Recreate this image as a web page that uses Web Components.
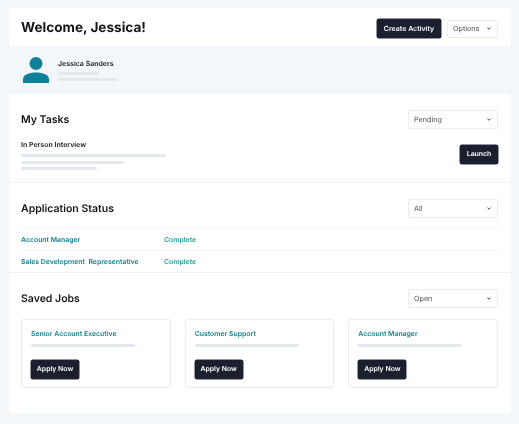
<!DOCTYPE html>
<html><head><meta charset="utf-8">
<style>
html,body{margin:0;padding:0;background:#f4f7fa;}
body{font-family:"Inter","Liberation Sans",sans-serif;width:519px;height:424px;overflow:hidden;text-rendering:geometricPrecision;}
</style></head>
<body>
<dash-board></dash-board>
<script>
function def(name, html){
  customElements.define(name, class extends HTMLElement{
    constructor(){super();const r=this.attachShadow({mode:'open'});r.innerHTML=html;}
  });
}
def('ui-button',`<style>
:host{display:inline-flex;align-items:center;justify-content:center;height:19px;width:48px;background:#1b1f2e;color:#fff;border-radius:2px;font:600 6.9px/1 "Inter","Liberation Sans",sans-serif;box-sizing:border-box;white-space:nowrap;box-shadow:0 0 0 .5px #2a2f40}
</style><slot></slot>`);
def('ui-select',`<style>
:host{display:flex;align-items:center;justify-content:space-between;height:19px;width:90px;padding:0 6.5px 0 5px;background:#fff;border:1px solid #ebeef1;border-radius:2px;box-sizing:border-box;font:400 7.2px/1 "Inter","Liberation Sans",sans-serif;color:#4a4f5a;flex:none}
svg{width:4px;height:3px;display:block}
</style><slot></slot><svg viewBox="0 0 4 3"><path d="M.4.5 2 2.300 3.600.5" fill="none" stroke="#3c404a" stroke-width=".9"/></svg>`);
def('skel-bar',`<style>
:host{display:block;height:3px;background:#e3e8ef;border-radius:2px}
</style>`);
def('section-head',`<style>
:host{display:flex;align-items:center;justify-content:space-between}
h2{margin:0;font:600 10.5px/19px "Inter","Liberation Sans",sans-serif;color:#14161c}
</style><h2><slot></slot></h2><slot name="action"></slot>`);
def('job-card',`<style>
:host{display:flex;flex-direction:column;align-items:flex-start;height:69px;box-sizing:border-box;padding:9px 9px 8px;border:1px solid #e9ecf0;border-radius:3px;background:#fff}
.t{font:600 6.9px/9px "Inter","Liberation Sans",sans-serif;color:#16838f;margin-bottom:6px;white-space:nowrap}
skel-bar{width:104px;margin-bottom:12.5px}
</style><div class="t"><slot></slot></div><skel-bar></skel-bar><ui-button>Apply Now</ui-button>`);
def('status-row',`<style>
:host{display:grid;grid-template-columns:143px 1fr;align-items:center;height:22px;padding-top:1px;border-top:1px solid #f1f3f5;box-sizing:border-box;font:600 6.9px/1 "Inter","Liberation Sans",sans-serif;white-space:pre}
.a{color:#16838f}.b{color:#2aa298}
</style><span class="a"><slot></slot></span><span class="b"><slot name="status"></slot></span>`);
def('page-header',`<style>
:host{display:flex;align-items:center;justify-content:space-between;height:38px;padding:3px 13px 0 12px;box-sizing:border-box}
h1{margin:0;font:700 13.6px/1 "Inter","Liberation Sans",sans-serif;color:#12141a}
.r{display:flex;gap:6px;align-items:center}
ui-select{width:51px;height:18px}
ui-button{width:64px;height:19px;font-size:7px}
</style><h1>Welcome, Jessica!</h1><div class="r"><ui-button>Create Activity</ui-button><ui-select>Options</ui-select></div>`);
def('profile-band',`<style>
:host{display:flex;align-items:center;gap:9px;height:48px;padding-left:14px;background:#f3f7f9;box-sizing:border-box}
svg{width:26px;height:26px;display:block}
.n{font:600 7px/9px "Inter","Liberation Sans",sans-serif;color:#15171d;margin-bottom:4px}
skel-bar{margin-top:3px}
.a{width:41px}.b{width:60px}
</style><svg viewBox="0 0 26 26"><circle cx="13" cy="6.500" r="6.500" fill="#0d8198"/><path d="M0 26v-3.500C0 17.500 6 15.500 13 15.500S26 17.500 26 22.500V26z" fill="#0d8198"/></svg>
<div><div class="n">Jessica Sanders</div><skel-bar class="a"></skel-bar><skel-bar class="b"></skel-bar></div>`);
def('tasks-section',`<style>
:host{display:block;height:89px;padding:16px 13px 0 12px;box-sizing:border-box;border-bottom:1px solid #eff1f3}
.row{display:flex;justify-content:space-between;margin-top:11px}
.n{font:600 7px/9px "Inter","Liberation Sans",sans-serif;color:#15171d;margin-bottom:5px}
skel-bar{margin-bottom:3.5px}
.a{width:145px}.b{width:103px}.c{width:76px}
ui-button{margin-top:5px;width:38px;height:19px}
</style><section-head>My Tasks<ui-select slot="action">Pending</ui-select></section-head>
<div class="row"><div><div class="n">In Person Interview</div><skel-bar class="a"></skel-bar><skel-bar class="b"></skel-bar><skel-bar class="c"></skel-bar></div><ui-button>Launch</ui-button></div>`);
def('status-section',`<style>
:host{display:block;height:90px;padding:16px 13px 0 12px;box-sizing:border-box;border-bottom:1px solid #eff1f3}
.rows{margin-top:10px}
</style><section-head>Application Status<ui-select slot="action">All</ui-select></section-head>
<div class="rows"><status-row>Account Manager<span slot="status">Complete</span></status-row><status-row>Sales Development  Representative<span slot="status">Complete</span></status-row></div>`);
def('saved-section',`<style>
:host{display:block;padding:16px 13px 25px 12px;box-sizing:border-box}
.g{display:grid;grid-template-columns:repeat(3,1fr);gap:14px;margin-top:11px}
</style><section-head>Saved Jobs<ui-select slot="action">Open</ui-select></section-head>
<div class="g"><job-card>Senior Account Executive</job-card><job-card>Customer Support</job-card><job-card>Account Manager</job-card></div>`);
def('dash-board',`<style>
:host{display:block;width:502px;margin:8px 0 0 9px;background:#fff;border-radius:3px;box-sizing:border-box;filter:blur(.25px)}
</style><page-header></page-header><profile-band></profile-band><tasks-section></tasks-section><status-section></status-section><saved-section></saved-section>`);
</script>
</body></html>
